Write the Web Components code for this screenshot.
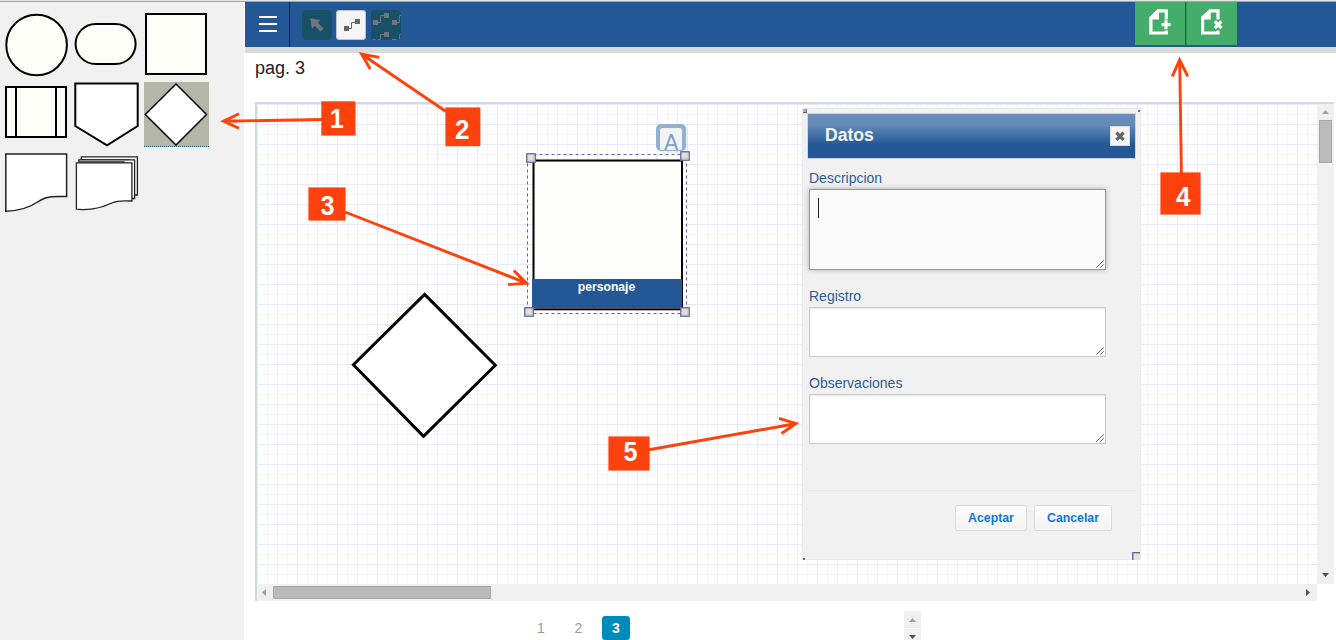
<!DOCTYPE html>
<html lang="es">
<head>
<meta charset="utf-8">
<title>Editor de diagramas</title>
<style>
html,body{margin:0;height:100%;overflow:hidden;background:#fff;font-family:"Liberation Sans",Arial,sans-serif}
</style>
</head>
<body>
<diagram-app></diagram-app>
<script>
const define = (name, html) => customElements.define(name, class extends HTMLElement {
  constructor() {
    super();
    const t = document.createElement('template');
    t.innerHTML = html;
    this.attachShadow({mode: 'open'}).append(t.content.cloneNode(true));
  }
});

define('shape-palette', `
<style>
:host{display:grid;grid-template-columns:repeat(3,65px);grid-auto-rows:65px;gap:5px;padding:10px 0 0 4px;box-sizing:border-box;align-content:start;background:#f1f1f1;width:244px}
svg{display:block;width:65px;height:65px;fill:#fdfef8;stroke:#000;stroke-width:2}
.sel{background:#b4b6a8;box-sizing:border-box;border-bottom:1px dotted #176080}
.w{fill:#fff}
.d{stroke:#222}
</style>
<svg><circle cx="32.6" cy="33" r="30.3"/></svg>
<svg><rect x="1.6" y="12" width="60" height="40" rx="20"/></svg>
<svg><rect x="2" y="2" width="60" height="60"/></svg>
<svg><rect x="2" y="5" width="60" height="50"/><path d="M12 5V55M52 5V55"/></svg>
<svg class="w"><path d="M1.3 1.5H63.7V44L33 63.3L1.3 44Z"/></svg>
<svg class="w sel" viewBox="0 0 65 64"><path stroke-width="1.5" d="M32 2L62.5 32.5L32 63L1.3 32.5Z"/></svg>
<svg class="w d"><path stroke-width="1.5" d="M1.8 2H62.6V44.6C50 44.2 43 44 36 48.5C26 55.5 15 59 1.8 59.2Z"/></svg>
<svg class="w d"><g stroke-width="1.3"><path d="M7.3 4.9H63.4V43H55V8H7.3Z"/><path d="M4.8 7.9H60.6V46.5H50V10H4.8Z"/><path d="M2.4 10.8H57.9V49C45 48.3 40 49.5 34 52.5C26 56.5 12 58.5 2.4 57.2Z"/></g></svg>
`);

define('tool-button', `
<style>
:host{display:block;width:30px;height:30px;border-radius:4px;background:#195068;box-sizing:border-box;overflow:hidden;color:#6b777d}
:host([active]){background:#f5f5f5;color:#666;box-shadow:0 0 0 1px #bcc6d0 inset}
::slotted(svg){display:block;width:30px;height:30px}
</style><slot></slot>`);

define('page-button', `
<style>
:host{display:block;width:50px;height:43px;background:#45ad6a;color:#fff}
::slotted(svg){display:block;width:50px;height:43px}
</style><slot></slot>`);

define('top-bar', `
<style>
:host{display:flex;height:51px;box-sizing:border-box;background:#235796;border-bottom:6px solid #dadada}
.menu{border-right:1px solid #0c1c30;display:flex;flex-direction:column;gap:5px;align-items:flex-start;padding:14px 0 0 14px;box-sizing:border-box;margin-right:12px;width:45px}
.menu i{display:block;width:18px;height:2px;background:#fff}
.tools{display:flex;padding-top:8px;gap:5px;margin-right:auto}
.tools tool-button:first-child{margin-right:-1px}
.pages{display:flex;gap:1px;margin-right:99px}
.pages page-button:last-child{width:51px;box-shadow:inset 1px 0 #349258}
</style>
<div class="menu"><i></i><i></i><i></i></div>
<div class="tools">
<tool-button><svg><path fill="currentColor" d="M8.2 8.2L18.5 10L15.8 12.7L21.5 18.4L18.5 21.4L12.8 15.7L10 18.6Z"/></svg></tool-button>
<tool-button active><svg><path fill="currentColor" d="M8 16h5v5H8zM19 9h5v5h-5z"/><path fill="none" stroke="currentColor" d="M13 18.5H15.5V12.5H19"/></svg></tool-button>
<tool-button><svg><path fill="currentColor" d="M2 10h5v5H2zM13 3h5v5h-5zM21 10h5v5h-5zM13 22h5v5h-5z"/><path fill="none" stroke="currentColor" d="M7 12.5H9.5V5.5H13M26 12.5H28.5V5.5H30M2 29.5H4.5M7 29.5H9.5V24.5H13M21 29.5H25.5M28.5 30V24.5H30"/></svg></tool-button>
</div>
<div class="pages">
<page-button><svg><path fill="none" stroke="#fff" stroke-width="3.2" d="M31.3 17.5V8.8H23.2L15.9 16V31H31.3V28.5"/><path fill="#fff" d="M14.5 17.5V15L22.5 7.5H24V17.5Z"/><path stroke="#fff" stroke-width="3.2" d="M26.5 22.7H35.5M31 18.2V27.2"/></svg></page-button>
<page-button><svg><path fill="none" stroke="#fff" stroke-width="3.2" d="M32 17.5V8.8H24L16.6 16V31H32V28.5"/><path fill="#fff" d="M15.2 17.5V15L23.2 7.5H24.7V17.5Z"/><path stroke="#fff" stroke-width="3.2" d="M28.8 19.3L35.4 26.1M35.4 19.3L28.8 26.1"/></svg></page-button>
</div>`);

define('scroll-v', `
<style>
:host{display:flex;flex-direction:column;justify-content:space-between;align-items:center;background:#f0f0f0;width:17px;box-sizing:border-box;padding:6px 0 7px}
.top{display:flex;flex-direction:column;align-items:center;gap:6px}
svg{display:block}.thumb{width:13px;height:43px;background:#bbb;border:1px solid #a6a6a6;box-sizing:border-box}
</style>
<div class="top"><svg width="7" height="4"><path fill="#a0a0a0" d="M0 4L3.5 0L7 4Z"/></svg><div class="thumb"></div></div>
<svg width="7" height="4"><path fill="#505050" d="M0 0H7L3.5 4Z"/></svg>`);

define('scroll-h', `
<style>
:host{display:flex;justify-content:space-between;align-items:center;background:#f0f0f0;height:17px;box-sizing:border-box;padding:0 7px 0 5px}
.l{display:flex;align-items:center;gap:7px}
svg{display:block}.thumb{width:218px;height:13px;background:#bbb;border:1px solid #a6a6a6;box-sizing:border-box}
</style>
<div class="l"><svg width="4" height="7"><path fill="#a0a0a0" d="M4 0L0 3.5L4 7Z"/></svg><div class="thumb"></div></div>
<svg width="4" height="7"><path fill="#505050" d="M0 0V7L4 3.5Z"/></svg>`);

define('text-field', `
<style>
:host{display:block;color:#2d5b98;font-size:14px;line-height:16px}
label{display:block;height:19px}
.box{width:297px;height:50px;box-sizing:border-box;border:1px solid #c9c9c9;background:#fff;box-shadow:inset 0 1px 2px #0000001a;display:flex;align-items:flex-end;justify-content:space-between}
:host([focused]) .box{height:81px;background:#fafafa;border-color:#999;box-shadow:0 0 5px #aaa}
i{display:none;width:1px;height:20px;background:#222;align-self:flex-start;margin:8px 0 0 8px}
:host([focused]) i{display:block}
svg{margin-left:auto;width:9px;height:9px}
</style>
<label><slot></slot></label><div class="box"><i></i><svg><path fill="none" stroke="#555" stroke-width=".9" d="M.3 7.7L7.7 .3M4.3 7.7L7.7 4.3"/></svg></div>`);

define('push-button', `
<style>:host{display:block;box-sizing:border-box;height:26px;border:1px solid #dcdcdc;border-radius:2px;background:linear-gradient(#fcfcfc,#f4f4f4);color:#0f76e0;font:bold 12.3px/24px "Liberation Sans",Arial,sans-serif;text-align:center}</style><slot></slot>`);

define('data-dialog', `
<style>
:host{display:block;box-sizing:border-box;width:339px;height:452px;background:#f1f1f1;border:1px solid #e9e9ea;padding:4px 4px 0}
header{display:flex;justify-content:space-between;align-items:center;height:46px;box-sizing:border-box;border:1px solid #cbd7e4;background:linear-gradient(#6c8fbb,#638ab8 25%,#235796 70%);color:#f4f6f8;font:bold 17.6px/20px "Liberation Sans",Arial,sans-serif;padding:0 5px 0 17px}
header span{margin-top:-2px}
.x{width:20px;height:20px;background:#f6f6f6;box-sizing:border-box;border:1px solid #ddd}
.x svg{display:block;width:18px;height:18px}
main{padding:11px 0 0 2px;height:332px;box-sizing:border-box;border-bottom:1px solid #e8e8e8}
text-field{margin-bottom:18px}
footer{display:flex;justify-content:flex-end;gap:7px;padding:14px 24px 0 0}
footer push-button:first-child{width:72px}footer push-button:last-child{width:78px}
.h{position:absolute}
</style>
<header><span>Datos</span><div class="x"><svg><path stroke="#626262" stroke-width="3.2" d="M5.4 5.6L12.6 12.8M12.6 5.6L5.4 12.8"/></svg></div></header>
<main><text-field focused>Descripcion</text-field><text-field>Registro</text-field><text-field>Observaciones</text-field></main>
<footer><push-button>Aceptar</push-button><push-button>Cancelar</push-button></footer>
<svg class="h" style="left:0;top:0" width="339" height="452"><path fill="#67679a" d="M0 3V0H4V4H0ZM335 1h2v2h-2zM0 449h2v2H0zM329 443h8v1h-7v7h-1z"/><path fill="#b0b0b0" d="M0 0H3V3H0ZM330 444h7v1h-6v6h-1z"/><path fill="#e2e2e2" d="M331 445h6v6h-6z"/></svg>`);

define('diagram-canvas', `
<style>
:host{display:block;position:relative;overflow:hidden;background:#fff}
.free{position:absolute;left:0;top:0;width:1060px;height:480px}
data-dialog{position:absolute;left:545px;top:4px}
</style>
<svg class="free" viewBox="257 104 1060 480">
<defs><pattern id="g" x="257" y="104" width="20" height="20" patternUnits="userSpaceOnUse"><path fill="none" stroke="#f4f4fd" d="M10.5 0V20M0 10.5H20"/><path fill="none" stroke="#e8e8ff" d="M.5 0V20M0 .5H20"/></pattern>
<g id="h"><rect x=".75" y=".75" width="8.5" height="8.5" fill="#dedede" stroke="#65659a" stroke-width="1.3"/><path d="M2 8.1H8.1V2" fill="none" stroke="#b9b9b9"/></g></defs>
<rect x="257" y="104" width="1060" height="480" fill="url(#g)"/>
<path fill="#fff" stroke="#000" stroke-width="3" d="M424.6 294.4L495.3 365.3L423.5 436.3L353.4 364.7Z"/>
<rect x="533.5" y="160.5" width="148.5" height="148.8" fill="#fdfef9" stroke="#000" stroke-width="2"/>
<path d="M534.5 309V161.5H681" fill="none" stroke="#777"/>
<rect x="532" y="279" width="150" height="29" fill="#235796"/>
<text x="606.5" y="291" text-anchor="middle" fill="#fff" font-family="Liberation Sans" font-weight="bold" font-size="12.5" textLength="57.5" lengthAdjust="spacingAndGlyphs">personaje</text>
<rect x="527.5" y="154.5" width="159" height="159" fill="none" stroke="#65659a" stroke-dasharray="3 3"/>
<rect x="658" y="126" width="30" height="27" rx="5" fill="#0001"/><rect x="656" y="124" width="30" height="27" rx="5" fill="#93b0d0"/><rect x="660" y="128" width="22" height="22" rx="2" fill="#f1f4f7"/>
<text x="671.3" y="149.5" text-anchor="middle" fill="#7b9fca" font-family="DejaVu Sans" font-size="21">A</text>
<use href="#h" x="526" y="153"/><use href="#h" x="680" y="151"/><use href="#h" x="524" y="307"/><use href="#h" x="680" y="307"/>
</svg>
<data-dialog></data-dialog>`);

define('page-nav', `
<style>
:host{display:flex;align-items:flex-start;font-size:14px;line-height:24px;color:#999;height:29px}
span{width:28px;text-align:center;margin:5px 9.5px 0 0}
b{width:28px;height:24px;margin-top:5px;background:#008cba;color:#fff;border-radius:3px;text-align:center}
.spin{display:flex;flex-direction:column;gap:1px;margin-left:274px}
.spin div{width:17px;height:17px;background:#f0f0f0;display:flex;align-items:center;justify-content:center}
.spin div:last-child svg{margin-top:-2px}
</style>
<span>1</span><span>2</span><b>3</b>
<div class="spin"><div><svg width="7" height="4"><path fill="#a0a0a0" d="M0 4L3.5 0L7 4Z"/></svg></div><div><svg width="7" height="4"><path fill="#505050" d="M0 0H7L3.5 4Z"/></svg></div></div>`);

define('callout-layer', `
<style>
:host{display:block;position:absolute;left:0;top:0;width:1336px;height:640px;pointer-events:none}
svg{display:block}
text{font:bold 28px "Liberation Sans",Arial,sans-serif;fill:#fff;text-anchor:middle;stroke:none}
rect{fill:#ff410d;stroke:none}
</style>
<svg width="1336" height="640" fill="none" stroke="#ff410d" stroke-width="2.9">
<path d="M322 119.5L225 121.2M239 113.8L223.5 121.2L239 128.3M446 111.5L362.5 54.7M379.3 57.4L361.5 54L370.2 69M345 212L525.5 282.7M513.8 270.5L526.5 283.1L508 284.6M1181.4 173L1179.7 61M1172.3 76.3L1179.6 60L1187.8 76.3M649 449.8L795 423.8M779 418.3L796 423.5L781.5 433.5"/>
<rect x="321.3" y="101.3" width="34.2" height="34.3"/><rect x="445.4" y="107.4" width="35" height="38.8"/><rect x="308.4" y="187.4" width="37.2" height="33.2"/><rect x="1160.4" y="172.4" width="40.2" height="42.2"/><rect x="608.4" y="436.4" width="41.2" height="34.2"/>
<text transform="translate(336.8 128.4) scale(.9 1)">1</text><text transform="translate(462.3 139.3) scale(.93 1)">2</text><text transform="translate(327.6 214.7) scale(.9 1)">3</text><text transform="translate(1183.3 205.5) scale(.93 1)">4</text><text transform="translate(630.5 461) scale(.9 1)">5</text>
</svg>`);

define('diagram-app', `
<style>
:host{display:flex;flex-direction:column;position:relative;width:1336px;height:640px;overflow:hidden}
.edge{height:2px;flex:none;box-sizing:border-box;background:#e3e3e3;border-bottom:1px solid #a6a6a6}
.body{display:flex;flex:1;min-height:0}
.main{flex:1;display:flex;flex-direction:column;min-width:0;margin-left:1px}
h1{margin:0;font-size:18px;line-height:20px;font-weight:400;color:#222;padding:5px 0 0 10px;height:49px;box-sizing:border-box}
.view{display:grid;grid-template-columns:1060px 17px;grid-template-rows:480px 17px;margin-left:10px;width:1079px;box-sizing:border-box;border-top:2px solid #d3dada;border-left:2px solid #d3dada}
page-nav{margin:10px 0 0 282px}
</style>
<div class="edge"></div>
<div class="body"><shape-palette></shape-palette>
<div class="main"><top-bar></top-bar><h1>pag. 3</h1>
<div class="view"><diagram-canvas></diagram-canvas><scroll-v></scroll-v><scroll-h></scroll-h></div>
<page-nav></page-nav></div></div>
<callout-layer></callout-layer>`);
</script>
</body>
</html>
